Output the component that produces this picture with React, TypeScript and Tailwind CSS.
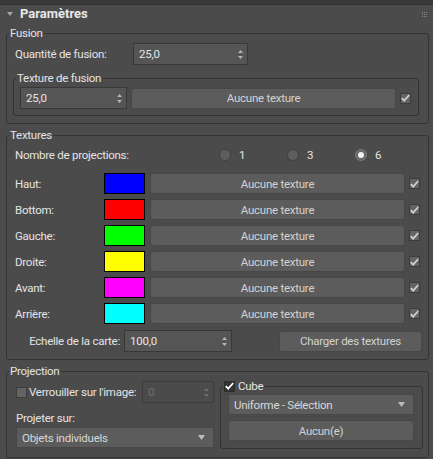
import React from 'react';

const FONT = { fontFamily: 'Roboto, "Liberation Sans", Arial, sans-serif' };
const TXT = 'text-[11.5px] leading-[14px] tracking-[-0.25px]';

function SpinArrows({ dim }: { dim?: boolean }) {
    return (
        <svg width="5" height="9" viewBox="0 0 5 9" className="mr-[4px] shrink-0">
            <path d="M2.5 0 L5 3 L0 3 Z M2.5 9 L5 6 L0 6 Z" fill={dim ? '#6e6e6e' : '#b4b4b4'} />
        </svg>
    );
}

function DropArrow() {
    return (
        <svg width="7" height="5" viewBox="0 0 7 5" className="mr-[8px] shrink-0">
            <path d="M0 0 L7 0 L3.5 5 Z" fill="#bdbdbd" />
        </svg>
    );
}

function Spinner({ value, className = '', disabled }: { value: string; className?: string; disabled?: boolean }) {
    return (
        <div
            className={`flex items-center h-[22px] border ${disabled ? 'border-[#3d3d3d] bg-[#4b4b4b] text-[#707070]' : 'border-[#383838] bg-[#555555] text-[#e6e6e6]'} ${className}`}
        >
            <span className={`flex-1 pl-[5px] ${TXT}`}>{value}</span>
            <SpinArrows dim={disabled} />
        </div>
    );
}

function Button({ label, className = '' }: { label: string; className?: string }) {
    return (
        <div
            className={`flex items-center justify-center h-[21px] rounded-[3px] border border-[#474747] bg-[#5c5c5c] text-[#d2d2d2] ${TXT} ${className}`}
        >
            {label}
        </div>
    );
}

function Dropdown({ label, className = '' }: { label: string; className?: string }) {
    return (
        <div className={`flex items-center h-[21px] border border-[#474747] bg-[#5c5c5c] ${className}`}>
            <span className={`flex-1 pl-[5px] text-[#d8d8d8] ${TXT}`}>{label}</span>
            <DropArrow />
        </div>
    );
}

function Check({ checked = true, dark }: { checked?: boolean; dark?: boolean }) {
    return (
        <div
            className={`flex items-center justify-center w-[11px] h-[11px] shrink-0 border ${dark ? 'border-[#2e2e2e] bg-[#333333]' : 'border-[#3c3c3c] bg-[#636363]'}`}
        >
            {checked && (
                <svg width="9" height="8" viewBox="0 0 9 8">
                    <path d="M0.8 4.2 L3.2 6.6 L8.2 1" stroke={dark ? '#ffffff' : '#cfcfcf'} strokeWidth="1.8" fill="none" />
                </svg>
            )}
        </div>
    );
}

function Radio({ label, selected }: { label: string; selected?: boolean }) {
    return (
        <div className="flex items-center w-[68px]">
            <div
                className={`flex items-center justify-center w-[12px] h-[12px] rounded-full border ${selected ? 'border-[#7a7a7a] bg-[#676767]' : 'border-[#404040] bg-[#5e5e5e]'}`}
            >
                {selected && <div className="w-[6px] h-[6px] rounded-full bg-[#f2f2f2]" />}
            </div>
            <span className={`ml-[8px] text-[#e4e4e4] ${TXT}`}>{label}</span>
        </div>
    );
}

function Group({
    legend,
    className = '',
    children,
}: {
    legend: React.ReactNode;
    className?: string;
    children: React.ReactNode;
}) {
    return (
        <fieldset className={`border border-[#333333] rounded-[3px] ${className}`}>
            <legend className={`ml-[2px] px-[1px] text-[#e4e4e4] ${TXT}`}>{legend}</legend>
            {children}
        </fieldset>
    );
}

const rows = [
    { label: 'Haut:', color: 'bg-[#0000ff]' },
    { label: 'Bottom:', color: 'bg-[#ff0000]' },
    { label: 'Gauche:', color: 'bg-[#00ff00]' },
    { label: 'Droite:', color: 'bg-[#ffff00]' },
    { label: 'Avant:', color: 'bg-[#ff00ff]' },
    { label: 'Arrière:', color: 'bg-[#00ffff]' },
];

export default function App() {
    return (
        <div className="w-[433px] h-[459px] bg-[#4b4b4b] overflow-hidden" style={FONT}>
            <div className="h-[4px] bg-[#3a3a3a]" />
            <div className="border-t border-[#333333] pl-[6px] pr-[4px]">
                {/* Header */}
                <div className="flex items-center h-[18px]">
                    <svg width="6" height="4" viewBox="0 0 6 4" className="ml-[1px]">
                        <path d="M0 0 L6 0 L3 4 Z" fill="#a8a8a8" />
                    </svg>
                    <span className="ml-[7px] text-[13px] leading-[16px] font-bold text-[#e8e8e8]">Paramètres</span>
                    <div className="ml-auto mr-[2px] grid grid-cols-3 gap-[1px]">
                        {Array.from({ length: 9 }).map((_, i) => (
                            <div key={i} className="w-[1px] h-[1px] bg-[#8a8a8a]" />
                        ))}
                    </div>
                </div>

                {/* Fusion */}
                <Group legend="Fusion" className="mt-[3px] pb-[7px]">
                    <div className="flex items-center mt-[3px] ml-[8px]">
                        <span className={`w-[118px] text-[#e4e4e4] ${TXT}`}>Quantité de fusion:</span>
                        <Spinner value="25,0" className="w-[115px]" />
                    </div>
                    <Group legend="Texture de fusion" className="mt-[6px] ml-[6px] w-[406px] pb-[6px]">
                        <div className="flex items-center mt-[2px] ml-[6px]">
                            <Spinner value="25,0" className="w-[107px]" />
                            <Button label="Aucune texture" className="ml-[4px] w-[265px]" />
                            <div className="ml-[4px]">
                                <Check />
                            </div>
                        </div>
                    </Group>
                </Group>

                {/* Textures */}
                <Group legend="Textures" className="mt-[4px] pb-[7px]">
                    <div className="flex items-center mt-[5px] ml-[8px] h-[16px]">
                        <span className={`w-[204px] text-[#e4e4e4] ${TXT}`}>Nombre de projections:</span>
                        <Radio label="1" />
                        <Radio label="3" />
                        <Radio label="6" selected />
                    </div>
                    <div className="flex flex-col gap-[5px] mt-[10px]">
                        {rows.map((r) => (
                            <div key={r.label} className="flex items-center ml-[8px]">
                                <span className={`w-[89px] text-[#e4e4e4] ${TXT}`}>{r.label}</span>
                                <div className={`w-[41px] h-[21px] border border-black ${r.color}`} />
                                <Button label="Aucune texture" className="ml-[5px] w-[255px]" />
                                <div className="ml-[4px]">
                                    <Check />
                                </div>
                            </div>
                        ))}
                    </div>
                    <div className="flex items-center mt-[6px] ml-[8px]">
                        <span className={`w-[105px] text-right text-[#e4e4e4] ${TXT}`}>Echelle de la carte:</span>
                        <Spinner value="100,0" className="ml-[4px] w-[108px]" />
                        <Button label="Charger des textures" className="ml-[47px] w-[143px]" />
                    </div>
                </Group>

                {/* Projection */}
                <Group legend="Projection" className="mt-[4px] pb-[8px]">
                    <div className="flex items-start ml-[9px]">
                        <div className="flex flex-col w-[198px]">
                            <div className="flex items-center mt-[3px]">
                                <Check checked={false} />
                                <span className={`ml-[2px] whitespace-nowrap text-[#e4e4e4] ${TXT}`}>Verrouiller sur l'image:</span>
                                <Spinner value="0" disabled className="ml-auto w-[72px]" />
                            </div>
                            <span className={`mt-[8px] text-[#e4e4e4] ${TXT}`}>Projeter sur:</span>
                            <Dropdown label="Objets individuels" className="mt-[2px] w-[198px]" />
                        </div>
                        <Group
                            legend={
                                <span className="flex items-center gap-[3px]">
                                    <Check dark />
                                    <span>Cube</span>
                                </span>
                            }
                            className="ml-[6px] mt-[1px] w-[203px] pb-[7px]"
                        >
                            <div className="ml-[7px] mt-[1px] w-[186px]">
                                <Dropdown label="Uniforme - Sélection" className="w-full" />
                                <Button label="Aucun(e)" className="mt-[5px] w-full" />
                            </div>
                        </Group>
                    </div>
                </Group>
            </div>
        </div>
    );
}
